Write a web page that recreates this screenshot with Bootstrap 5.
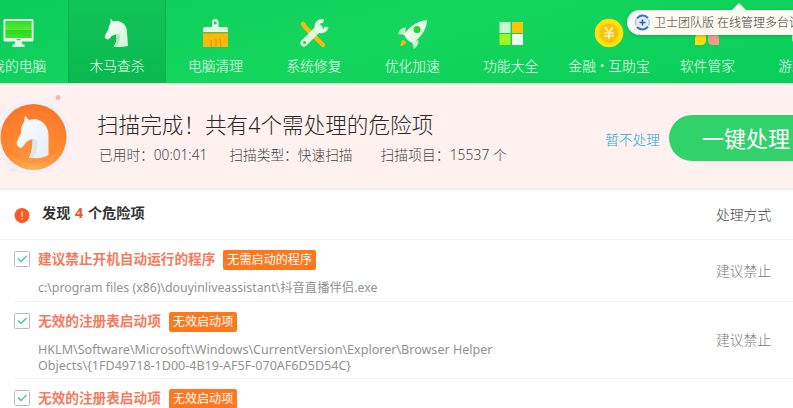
<!DOCTYPE html>
<html lang="zh-CN">
<head>
<meta charset="utf-8">
<meta name="viewport" content="width=device-width, initial-scale=1">
<title>木马查杀</title>
<link href="https://cdn.jsdelivr.net/npm/bootstrap@5.3.0/dist/css/bootstrap.min.css" rel="stylesheet">
<style>
html,body{height:408px;overflow:hidden}
body{font-family:"Noto Sans","Noto Sans CJK SC",sans-serif;font-size:13.6px;line-height:20px;background:#fff;color:#333}
.topbar{height:84px;background:linear-gradient(165deg,#0bcb5c 0%,#15d65d 45%,#09ce5b 100%);border-bottom:1px solid #d4f6dc}
.tools{margin-left:-30.5px;width:887px;height:83px}
.tool{width:98.4px;flex:none;height:83px;color:#f1fff5;font-weight:300;padding-top:17px}
.tool.active{background:linear-gradient(#10c457,#0ab951);box-shadow:inset 1px 0 #0bad4b,inset -1px 0 #0cb34e}
.tool svg{display:block;width:32px;height:32px;overflow:visible}
.tool span{margin-top:7px;font-size:13.8px;white-space:nowrap}
.promo{left:627px;top:10px;width:200px;height:25px;border-radius:13px 0 0 13px;background:#fbf9f0;color:#3c3c3c;font-size:12px;padding-left:7px;white-space:nowrap;box-shadow:0 1px 3px #087b3766;font-weight:300}
.promo::before{content:"";position:absolute;left:105px;top:-7px;border:7px solid transparent;border-top:0;border-bottom-color:#fbf9f0}
.promo svg{width:17px;height:17px;flex:none;margin-right:3px}
.result{height:106px;background:#fef1f0;border-bottom:2px solid #f1ecec}
.medal{width:76px;height:82px;margin-top:6px;margin-left:-4px;flex:none;overflow:visible}
.summary{margin-left:25px;padding-top:26px}
.summary h1{font-size:21.6px;line-height:30px;font-weight:300;color:#2a2a2a}
.facts{font-size:13.7px;font-weight:300;color:#444;white-space:nowrap;margin:5px 0 0 2px;gap:22px}
.facts .kind{margin-right:6px}
.facts .total{letter-spacing:.14px}
.skip{color:#1fabda;font-size:13.7px;font-weight:300;margin-top:46px}
.fix{width:160px;height:46px;margin-top:31px;margin-left:9px;margin-right:-36px;flex:none;border:0;border-radius:23px;background:#30d269;color:#fff;font-size:22px;line-height:46px;padding:0 0 0 33px;text-align:left;white-space:nowrap}
.found{height:50px;border-bottom:1px solid #f2f2f2;padding-left:14px}
.found b{font-size:14.2px;margin:-3px 0 0 12px;word-spacing:1px}
.found em{font-style:normal;color:#f2512b}
.mode{width:77px;flex:none;font-size:13.8px;font-weight:300;color:#444}
.risk{margin-left:14px;border-bottom:1px solid #f2f2f2}
.risk .mode{color:#7c7c7c}
.tick{width:16px;height:16px;flex:none;margin-top:11px;margin-right:8px}
.head-line{padding-top:10px}
.risk-title{font-size:13.65px;font-weight:700;color:#f57b5c;line-height:20px;margin-top:-1px}
.tag{background:#ff781e;color:#fff;border-radius:2px;font-size:12.1px;line-height:20px;height:20px;padding:0 4px;margin-left:8px;white-space:nowrap}
.where{font-size:12.55px;line-height:16px;color:#929292;white-space:nowrap;margin-top:10px}
.where.mixed{font-size:12.33px}
.r1{height:62px}.r2{height:77px}.r3{height:77px}
</style>
<script src="https://cdn.jsdelivr.net/npm/bootstrap@5.3.0/dist/js/bootstrap.bundle.min.js"></script>
</head>
<body>
<svg width="0" height="0" class="position-absolute" aria-hidden="true">
<defs>
<linearGradient id="leaf" x2="0" y2="1"><stop stop-color="#26e02c"/><stop offset=".5" stop-color="#5bea2c"/><stop offset=".55" stop-color="#2cd924"/><stop offset="1" stop-color="#3fe32b"/></linearGradient>
<linearGradient id="mint" x2="1" y2="1"><stop stop-color="#fff"/><stop offset="1" stop-color="#cdf3d3"/></linearGradient>
<linearGradient id="pearl" x2="1" y2="1"><stop stop-color="#fff"/><stop offset="1" stop-color="#e4edf4"/></linearGradient>
<radialGradient id="orange" cy=".95" r=".9"><stop stop-color="#ffb056"/><stop offset=".5" stop-color="#ff8a31"/><stop offset="1" stop-color="#f9762a"/></radialGradient>
</defs>
</svg>
<header class="topbar position-relative">
<nav class="tools d-flex">
<div class="tool d-flex flex-column align-items-center"><svg viewBox="0 0 32 32"><rect x="0.500" y="2" width="30" height="22.500" rx="1.500" fill="#e9fbe8"/><rect x="2.300" y="4" width="26.400" height="17" fill="url(#leaf)"/><path d="M12.500 24h6l1 3.500h2V30h-12v-2.500h2z" fill="#e2fae4"/><path d="M13.500 22.700h4" stroke="#28b760"/></svg><span>我的电脑</span></div>
<div class="tool active d-flex flex-column align-items-center"><svg viewBox="0 0 32 32"><path fill="url(#mint)" d="M9.700 1.500 12 4.500C20 2 26 8 26 15L27 29Q20 30.500 12.500 29.700Q17 24 15 17.500C12 18 10.500 18.500 9.500 20.500L7.300 22.500Q3 22 4 18.500L7.500 12Q8 8 9.500 6Z"/><path d="M15 17q4-1 4 2 0 5-3 10.800l-3.500-.1Q17 24 15 17.500z" fill="#b4e5b8"/></svg><span>木马查杀</span></div>
<div class="tool d-flex flex-column align-items-center"><svg viewBox="0 0 32 32"><path fill="#e0fae3" fill-rule="evenodd" d="M13 10V5q0-3 3.200-3t3.300 3v5H27q2 0 2 2v3H4v-3q0-2 2-2zM16.200 4.500a1.500 1.500 0 1 0 0 3 1.500 1.500 0 0 0 0-3"/><path d="M4 16h25v14H4z" fill="#fbb70c"/><path d="M4 15h25v1.500H4z" fill="#71b82d"/><path d="m12 23 .3 7M17 22v8m4-8 1 8" stroke="#d99a0b"/></svg><span>电脑清理</span></div>
<div class="tool d-flex flex-column align-items-center"><svg viewBox="0 0 32 32"><path d="m5 7 3 4 17 17" stroke="#fbb90c" stroke-width="4.500" stroke-linecap="round" fill="none"/><path d="M6 26 21 11" stroke="#def9dd" stroke-width="7" stroke-linecap="round"/><path d="M25.500 4.500a5 5 0 1 0 3 5.500" fill="none" stroke="#e8fde8" stroke-width="4"/><circle cx="6.500" cy="25.500" r="1.500" fill="#35c658"/></svg><span>系统修复</span></div>
<div class="tool d-flex flex-column align-items-center"><svg viewBox="0 0 32 32"><path d="M10 10.500Q4 10 2 17l7 1zM22 23q2 4-4 9l-2-7z" fill="#c8f4c5"/><path d="M31 3Q18 4 8 17q2 7 9 9Q31 16 31 3" fill="url(#mint)"/><circle cx="21" cy="12.500" r="3.500" fill="#2ad42b"/><path d="M6 23q4 0 4 3-2 3-6 3z" fill="#f6b70c"/></svg><span>优化加速</span></div>
<div class="tool d-flex flex-column align-items-center"><svg viewBox="0 0 32 32"><path d="M4.500 5h11v11h-11z" fill="#cdf7ce"/><path d="M17 5h11v11H17z" fill="#ffc400"/><path d="M4.500 17h11v11h-11z" fill="#a1f51c"/><path d="M17 17h11v11H17z" fill="#ecfdec"/></svg><span>功能大全</span></div>
<div class="tool d-flex flex-column align-items-center"><svg viewBox="0 0 32 32"><circle cx="16" cy="16" r="14.300" fill="#ffe20b"/><circle cx="16" cy="16" r="9.700" fill="#ffc20c"/><path d="m12 10 4 5.500 4-5.500m-4 5.500V22m-4.500-6h9m-9 3h9" fill="none" stroke="#fff9cf" stroke-width="1.500"/></svg><span>金融 • 互助宝</span></div>
<div class="tool d-flex flex-column align-items-center"><svg viewBox="0 0 32 32"><path d="M4 5h11v11H4z" fill="#cdf7ce"/><path d="M17 5h11v11H17z" fill="#afe635"/><path d="M4 28V22q0-5 5-5h6v6q0 5-5 5z" fill="#ffda13"/><path d="M17 17h6q5 0 5 5v6h-6q-5 0-5-5z" fill="#fc978b"/></svg><span>软件管家</span></div>
<div class="tool d-flex flex-column align-items-center"><svg viewBox="0 0 32 32"><path d="M7 10h18q5 1 5 10t-6 6l-4-5h-8l-4 5q-6 3-6-6t5-10" fill="#dcf8df"/></svg><span>游戏大厅</span></div>
</nav>
<div class="promo position-absolute d-flex align-items-center"><svg viewBox="0 0 17 17"><circle cx="8.500" cy="8.500" r="7" fill="#e1edfa"/><path d="M3 4.500A7 7 0 0 1 14 4M3 13a7 7 0 0 0 11-.5" fill="none" stroke="#3a72bd" stroke-width="2"/><path d="M2 5Q1 8.500 2 11.500M15 5.500q.8 3-.3 6" fill="none" stroke="#9cc4ec" stroke-width="1.300"/><path d="M8.500 5.500v6M5.500 8.500h6" stroke="#2360b2" stroke-width="1.500"/></svg><span>卫士团队版 在线管理多台设备</span></div>
</header>
<section class="result d-flex">
<svg class="medal" viewBox="-4 0 76 82"><ellipse cx="30" cy="80" rx="22" ry="3" fill="#f5e7e8"/><circle cx="33.500" cy="47" r="37" fill="#f3eff5"/><circle cx="33.500" cy="47" r="35.500" fill="#f4f1f7"/><circle cx="33.500" cy="47" r="33" fill="url(#orange)"/><circle cx="33.500" cy="47" r="27" fill="#ff8330" opacity=".45"/><path d="M25 26 29 30C40 26.500 48.500 35 48.500 45V65Q40 70 29 67.500Q33 60 32.500 49C28 50 26 52 25 54L21.500 58Q16 57 16.700 52L21 43Q20.500 37 24 32Z" fill="url(#pearl)"/><path d="M32.500 49q4.500 0 5 4 0 8-4 15l-4.500-.500Q33 60 32.500 49" fill="#d9e6ef"/><circle cx="58" cy="7.500" r="2.500" fill="#fdb4a9"/></svg>
<div class="summary flex-grow-1"><h1 class="mb-0 text-nowrap">扫描完成！共有4个需处理的危险项</h1><div class="facts d-flex"><span>已用时：00:01:41</span><span class="kind">扫描类型：快速扫描</span><span class="total">扫描项目：15537 个</span></div></div>
<a class="skip text-decoration-none text-nowrap" href="#">暂不处理</a>
<button class="fix" type="button">一键处理</button>
</section>
<main>
<div class="found d-flex align-items-center"><svg width="16" height="16" viewBox="0 0 16 16"><circle cx="8" cy="8.500" r="7.500" fill="#fa5927"/><path d="M8 4.500v5.500m0 1v1.500" stroke="#ffd9c9" stroke-width="1.400"/></svg><b class="flex-grow-1">发现 <em>4</em> 个危险项</b><span class="mode">处理方式</span></div>
<div class="risk r1 d-flex"><svg class="tick" viewBox="0 0 16 16"><rect x=".5" y=".5" width="15" height="15" rx="1" fill="#fff" stroke="#bdbdbd"/><path d="m4 7.500 3 3 5.500-5.500" fill="none" stroke="#49c994" stroke-width="1.400"/></svg><div class="flex-grow-1"><div class="head-line d-flex"><span class="risk-title">建议禁止开机自动运行的程序</span><span class="tag">无需启动的程序</span></div><div class="where mixed">c:\program files (x86)\douyinliveassistant\抖音直播伴侣.exe</div></div><span class="mode align-self-center">建议禁止</span></div>
<div class="risk r2 d-flex"><svg class="tick" viewBox="0 0 16 16"><rect x=".5" y=".5" width="15" height="15" rx="1" fill="#fff" stroke="#bdbdbd"/><path d="m4 7.500 3 3 5.500-5.500" fill="none" stroke="#49c994" stroke-width="1.400"/></svg><div class="flex-grow-1"><div class="head-line d-flex"><span class="risk-title">无效的注册表启动项</span><span class="tag">无效启动项</span></div><div class="where">HKLM\Software\Microsoft\Windows\CurrentVersion\Explorer\Browser Helper<br>Objects\{1FD49718-1D00-4B19-AF5F-070AF6D5D54C}</div></div><span class="mode align-self-center">建议禁止</span></div>
<div class="risk r3 d-flex"><svg class="tick" viewBox="0 0 16 16"><rect x=".5" y=".5" width="15" height="15" rx="1" fill="#fff" stroke="#bdbdbd"/><path d="m4 7.500 3 3 5.500-5.500" fill="none" stroke="#49c994" stroke-width="1.400"/></svg><div class="head-line d-flex"><span class="risk-title">无效的注册表启动项</span><span class="tag">无效启动项</span></div></div>
</main>
</body>
</html>
